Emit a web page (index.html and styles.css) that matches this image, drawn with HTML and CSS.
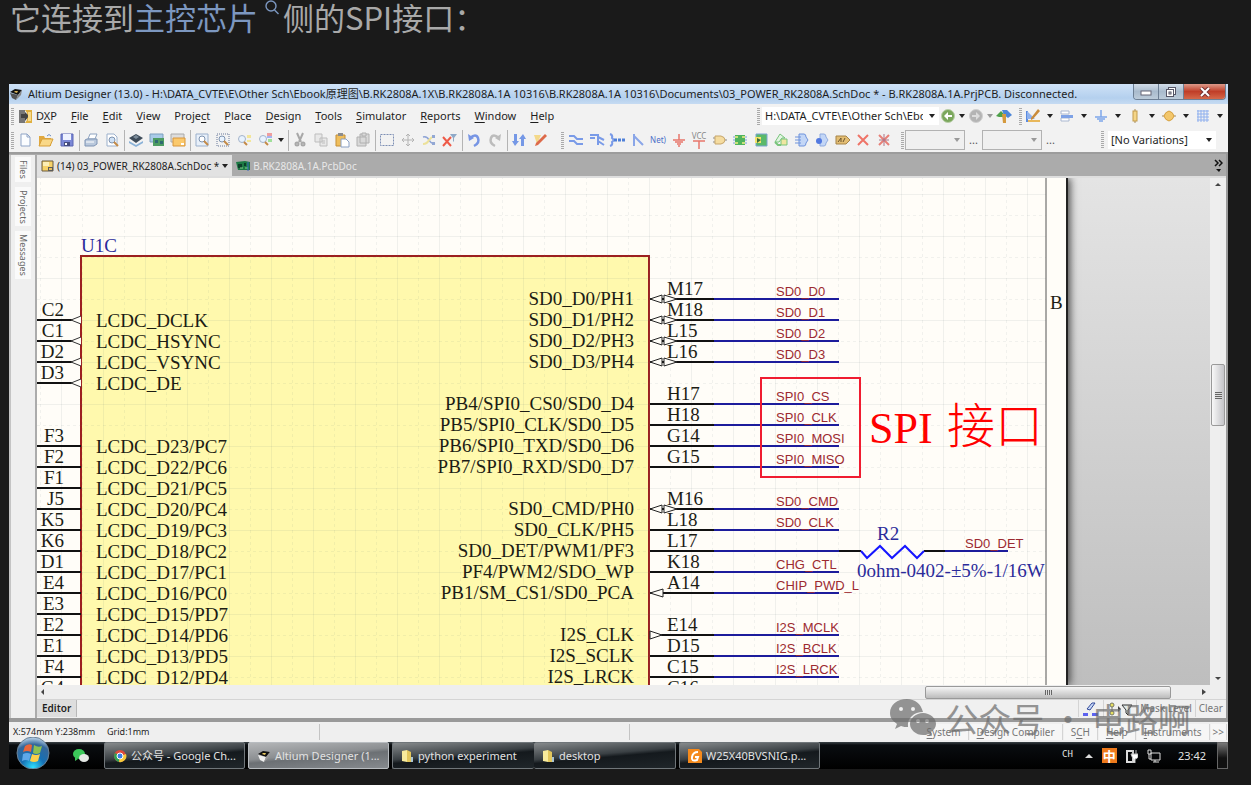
FILE: index.html
```html
<!DOCTYPE html>
<html lang="zh-CN">
<head>
<meta charset="utf-8">
<title>SPI接口</title>
<link rel="stylesheet" href="styles.css">
</head>
<body>
<p class="lead">它连接到<a class="term" href="#chip">主控芯片<svg class="term-icon" width="16" height="16" viewBox="0 0 16 16" fill="none" stroke="currentColor" stroke-width="1.4"><circle cx="7" cy="6" r="5"/><path d="M10.5 10l4 4"/></svg></a>侧的SPI接口：</p>

<main class="app">
  <header class="titlebar">
    <svg width="14" height="14" viewBox="0 0 14 14"><path d="M1 5l5-3 7 1-4 5z" fill="#111"/><path d="M1 6l8 2-2 5-4-2z" fill="#555"/><path d="M9 8l4-5-1 5-5 5z" fill="#888"/><path d="M6 4l3 0-1 2-3-1z" fill="#d8b45a"/></svg>
    <h1 class="title">Altium Designer (13.0) - H:\DATA_CVTE\E\Other Sch\Ebook原理图\B.RK2808A.1X\B.RK2808A.1A 10316\B.RK2808A.1A 10316\Documents\03_POWER_RK2808A.SchDoc * - B.RK2808A.1A.PrjPCB. Disconnected.</h1>
    <div class="win-buttons">
      <button class="win" aria-label="Minimize"><svg width="12" height="10" viewBox="0 0 12 10"><rect x="1" y="4" width="10" height="4" fill="#fff" stroke="#667"/></svg></button>
      <button class="win" aria-label="Restore"><svg width="12" height="12" viewBox="0 0 12 12" fill="#fff" stroke="#556"><rect x="3.500" y="1.500" width="7" height="7"/><rect x="1.500" y="3.500" width="7" height="7"/><rect x="4" y="6" width="2" height="2"/></svg></button>
      <button class="win close" aria-label="Close"><svg width="12" height="10" viewBox="0 0 12 10"><path d="M2 1l8 8M10 1l-8 8" stroke="#733" stroke-width="4"/><path d="M2 1l8 8M10 1l-8 8" stroke="#fff" stroke-width="2"/></svg></button>
    </div>
  </header>

  <div class="menubar">
    <span class="grip"></span>
    <nav class="menu">
      <a href="#dxp" class="dxp"><svg width="15" height="15" viewBox="0 0 15 15"><rect x="1" y="1" width="6" height="13" fill="#777"/><path d="M7 1h7v13H7l2-3V4z" fill="#e0b040"/><path d="M3 5h4V3l4 4-4 5V9H3z" fill="#444"/><path d="M10 3h3v9h-3z" fill="#f6d98a"/></svg><span>D<u>X</u>P</span></a>
      <a href="#file"><u>F</u>ile</a><a href="#edit"><u>E</u>dit</a><a href="#view"><u>V</u>iew</a><a href="#project">Proje<u>c</u>t</a><a href="#place"><u>P</u>lace</a><a href="#design"><u>D</u>esign</a><a href="#tools"><u>T</u>ools</a><a href="#simulator"><u>S</u>imulator</a><a href="#reports"><u>R</u>eports</a><a href="#window"><u>W</u>indow</a><a href="#help"><u>H</u>elp</a>
    </nav>
    <div class="nav-tools">
      <span class="grip"></span>
      <span class="combo path"><select aria-label="Document path"><option>H:\DATA_CVTE\E\Other Sch\Ebook</option></select></span>
      <button class="tool" aria-label="Back"><svg width="16" height="16" viewBox="0 0 16 16"><circle cx="8" cy="8" r="6.500" fill="#7ba75c" stroke="#b9cfa8"/><path d="M4 8l4-4v3h4v2H8v3z" fill="#fff"/></svg></button>
      <button class="drop" aria-label="Back history"></button>
      <button class="tool" aria-label="Forward"><svg width="16" height="16" viewBox="0 0 16 16"><circle cx="8" cy="8" r="6.500" fill="#b4b4b4" stroke="#d0d0d0"/><path d="M12 8L8 4v3H4v2h4v3z" fill="#ddd"/></svg></button>
      <button class="drop faint" aria-label="Forward history"></button>
      <button class="tool" aria-label="Home"><svg width="16" height="16" viewBox="0 0 16 16"><path d="M0 8l5-5 3 3v3H3z" fill="#4ea04a"/><path d="M6 2h5l5 5-4 3-4-3z" fill="#4d86d8"/><path d="M6 6h4v9H7z" fill="#d59a3e"/></svg></button>
      <span class="grip spaced"></span>
      <div class="place-tools">
        <button class="tool" aria-label="Drawing"><svg width="16" height="16" viewBox="0 0 16 16"><path d="M2 3v10h12" fill="none" stroke="#5a8ae0" stroke-width="2"/><path d="M2 3l8 8H2z" fill="#8fb2ee"/><path d="M13 1l2 2-7 8-2 1v-2z" fill="#c98b3a"/><path d="M3 12h12v2H3z" fill="#e8b75a"/></svg></button><button class="drop" aria-label="Drawing list"></button>
        <button class="tool" aria-label="Align"><svg width="16" height="16" viewBox="0 0 16 16"><path d="M2 3h8v3H2zM2 10h8v3H2z" fill="#fff" stroke="#a9b7d0"/><path d="M2 7h12v3H2z" fill="#7ea2e6"/></svg></button><button class="drop" aria-label="Align list"></button>
        <button class="tool" aria-label="Power"><svg width="16" height="16" viewBox="0 0 16 16"><path d="M8 2v7M2 9h12M4 11h8M6 13h4" stroke="#7ea6ea" stroke-width="1.500"/></svg></button><button class="drop" aria-label="Power list"></button>
        <button class="tool" aria-label="Parts"><svg width="16" height="16" viewBox="0 0 16 16"><path d="M8 1v14" stroke="#a58b5a"/><rect x="6" y="3" width="4" height="10" fill="#f4d588" stroke="#c29a4a"/></svg></button><button class="drop" aria-label="Parts list"></button>
        <button class="tool" aria-label="Sources"><svg width="16" height="16" viewBox="0 0 16 16"><path d="M1 8h14" stroke="#a58b5a"/><path d="M8 3q4 1 5 5-1 4-5 5-4-1-5-5 1-4 5-5z" fill="#f3c76c" stroke="#d6a040"/></svg></button><button class="drop" aria-label="Sources list"></button>
        <button class="tool" aria-label="Grid"><svg width="16" height="16" viewBox="0 0 16 16"><path d="M3 2v12M6 2v12M9 2v12M12 2v12M2 3h12M2 6h12M2 9h12M2 12h12" stroke="#8fb0ee"/></svg></button><button class="drop" aria-label="Grid list"></button>
      </div>
    </div>
  </div>

  <div class="toolbar">
    <span class="grip"></span>
    <button class="tool" aria-label="New"><svg width="16" height="16" viewBox="0 0 16 16"><path d="M4 2h6l3 3v9H4z" fill="#fbfdff" stroke="#8fa4c6"/><path d="M10 2v3h3" fill="none" stroke="#8fa4c6"/></svg></button>
    <button class="tool" aria-label="Open"><svg width="16" height="16" viewBox="0 0 16 16"><path d="M1 4h5l1 2h6v8H1z" fill="#e0a83f"/><path d="M4 7h11l-3 7H1z" fill="#f9d888" stroke="#d79f38"/><path d="M9 4q2-3 4 0" fill="none" stroke="#6d8fc4"/></svg></button>
    <button class="tool" aria-label="Save"><svg width="16" height="16" viewBox="0 0 16 16"><path d="M2 2h12v12H2z" fill="#7b88d6" stroke="#5d67b4"/><path d="M4 2h8v6H4z" fill="#eef2ff"/><path d="M5 10h6v4H5z" fill="#454c80"/><path d="M6 11h2v2H6z" fill="#fff"/></svg></button>
    <span class="sep"></span>
    <button class="tool" aria-label="Print"><svg width="16" height="16" viewBox="0 0 16 16"><path d="M5 7l2-5h7l-2 5z" fill="#fff" stroke="#8ea3c0"/><path d="M2 8l2-1h10v5l-3 2H2z" fill="#b9c8dc" stroke="#7f94b4"/><path d="M3 10h8" stroke="#fff"/></svg></button>
    <button class="tool" aria-label="Preview"><svg width="16" height="16" viewBox="0 0 16 16"><path d="M3 2h7l3 3v9H3z" fill="#fff" stroke="#9bb0cc"/><circle cx="8" cy="8" r="3" fill="#cfe1f5" stroke="#7e93b0"/><path d="M10 10l4 4" stroke="#c48a46" stroke-width="2"/></svg></button>
    <span class="sep"></span>
    <button class="tool" aria-label="Board"><svg width="16" height="16" viewBox="0 0 16 16"><path d="M1 9l7 4 7-4v2l-7 4-7-4z" fill="#8bb2d8"/><path d="M1 6l7-4 7 4-7 5z" fill="#3e4c5a"/><path d="M5 5l3-2 3 2-3 2z" fill="#7d8d9c"/></svg></button>
    <button class="tool" aria-label="PCB"><svg width="16" height="16" viewBox="0 0 16 16"><path d="M1 2h13v8H1z" fill="#a9cbe8" stroke="#7c9fbe"/><path d="M4 6h11v8H4z" fill="#4d9c62"/><path d="M6 8h3v3H6zM11 9h3v3h-3z" fill="#2f6a72"/></svg></button>
    <button class="tool" aria-label="Sheet"><svg width="16" height="16" viewBox="0 0 16 16"><path d="M1 2h13v8H1z" fill="#ddd" stroke="#aaa"/><path d="M3 6h12v8H3z" fill="#fbc96c" stroke="#d8963c"/><path d="M11 11h3v2h-3z" fill="#fff"/></svg></button>
    <span class="sep"></span>
    <button class="tool" aria-label="Fit document"><svg width="16" height="16" viewBox="0 0 16 16"><path d="M2 2h12v12H2z" fill="#e8f0fa" stroke="#9bb0cc"/><circle cx="8" cy="7" r="3" fill="#fff" stroke="#7e93b0"/><path d="M10 9l4 4" stroke="#c48a46" stroke-width="2"/></svg></button>
    <button class="tool" aria-label="Zoom area"><svg width="16" height="16" viewBox="0 0 16 16"><path d="M2 2h12v12H2z" fill="none" stroke="#68789a" stroke-dasharray="1 1"/><circle cx="7" cy="7" r="3" fill="#e8f3ff" stroke="#7e93b0"/><path d="M9 9l4 4" stroke="#c48a46" stroke-width="2"/></svg></button>
    <button class="tool" aria-label="Zoom selected"><svg width="16" height="16" viewBox="0 0 16 16"><circle cx="6" cy="7" r="3.500" fill="#e8f3ff" stroke="#a3b3ca"/><path d="M8 10l3 3" stroke="#c48a46" stroke-width="2"/><path d="M11 3h4v3h-4zM11 8h4v2h-4z" fill="#f3e69a"/></svg></button>
    <button class="tool" aria-label="Zoom filtered"><svg width="16" height="16" viewBox="0 0 16 16"><circle cx="6" cy="7" r="3.500" fill="#e8f3ff" stroke="#a3b3ca"/><path d="M8 10l3 3" stroke="#c48a46" stroke-width="2"/><path d="M10 1h5v3h-5z" fill="#ef9e9e"/><path d="M10 4h5v2h-5z" fill="#a2b4f2"/><path d="M11 7h4v3h-4z" fill="#a0e09a"/></svg></button>
    <button class="drop" aria-label="Zoom list"></button>
    <span class="sep"></span>
    <button class="tool" aria-label="Cut"><svg width="16" height="16" viewBox="0 0 16 16" fill="none" stroke="#a8a8a8" stroke-width="2"><path d="M5 1l4 9M11 1L7 10"/><circle cx="5" cy="12" r="1.500"/><circle cx="11" cy="12" r="1.500"/></svg></button>
    <button class="tool" aria-label="Copy"><svg width="16" height="16" viewBox="0 0 16 16" fill="#e8e8e8" stroke="#bdbdbd"><path d="M2 2h7v8H2zM7 6h7v8H7z"/><path d="M9 9h3M9 11h3"/></svg></button>
    <button class="tool" aria-label="Paste"><svg width="16" height="16" viewBox="0 0 16 16"><path d="M2 3h9v11H2z" fill="#efbe5c" stroke="#c58f36"/><path d="M4 1h5v3H4z" fill="#8c8c8c"/><path d="M7 7h5l3 3v5H7z" fill="#fff" stroke="#8aa0c4"/></svg></button>
    <button class="tool" aria-label="Rubber stamp"><svg width="16" height="16" viewBox="0 0 16 16" fill="#d9d9d9" stroke="#b0b0b0"><path d="M5 2h9v9H5zM2 5h9v9H2z"/><path d="M7 1h4v3H7z"/></svg></button>
    <span class="sep"></span>
    <button class="tool" aria-label="Select area"><svg width="16" height="16" viewBox="0 0 16 16"><rect x="1.500" y="2.500" width="13" height="11" fill="none" stroke="#7d8fb4" stroke-dasharray="2 1"/></svg></button>
    <button class="tool" aria-label="Move"><svg width="16" height="16" viewBox="0 0 16 16" stroke="#b4b4b4" fill="none"><path d="M8 2v12M2 8h12M6 4l2-2 2 2M6 12l2 2 2-2M4 6L2 8l2 2M12 6l2 2-2 2"/></svg></button>
    <button class="tool" aria-label="Deselect"><svg width="16" height="16" viewBox="0 0 16 16"><path d="M2 5q4-1 6 3t6 3" fill="none" stroke="#8ea4d6" stroke-width="1.500"/><path d="M2 12q4 0 6-4l3-3" fill="none" stroke="#ece19a" stroke-width="2"/><path d="M11 3h3v3h-3zM11 10h3v3h-3z" fill="#93a8d4"/></svg></button>
    <button class="tool" aria-label="Clear filter"><svg width="16" height="16" viewBox="0 0 16 16"><path d="M1 5l8 9M9 5l-8 9" stroke="#ee5a48" stroke-width="2"/><path d="M8 2h7l-3 4v4l-1-1V6z" fill="#8fa9c8"/></svg></button>
    <span class="sep"></span>
    <button class="tool" aria-label="Undo"><svg width="16" height="16" viewBox="0 0 16 16"><path d="M4 6q6-5 8 0t-4 8" fill="none" stroke="#7795e4" stroke-width="2.500"/><path d="M2 2l1 7 5-3z" fill="#7795e4"/></svg></button>
    <button class="tool" aria-label="Redo"><svg width="16" height="16" viewBox="0 0 16 16"><path d="M12 6q-6-5-8 0t4 8" fill="none" stroke="#bcbcbc" stroke-width="2.500"/><path d="M14 2l-1 7-5-3z" fill="#bcbcbc"/></svg></button>
    <span class="sep"></span>
    <button class="tool" aria-label="Hierarchy"><svg width="16" height="16" viewBox="0 0 16 16" fill="#7598e6"><path d="M3 2h3v7h2l-4 5-3-5h2zM10 14h3V7h2l-3-5-4 5h2z"/></svg></button>
    <button class="tool" aria-label="Cross probe"><svg width="16" height="16" viewBox="0 0 16 16"><path d="M2 3h7l-4 9z" fill="#f4d98a"/><path d="M13 2l2 2-9 9-3 1 1-3z" fill="#dd6a4a"/></svg></button>
    <span class="grip wide"></span>
    <div class="wiring">
      <button class="tool" aria-label="Wire"><svg width="16" height="16" viewBox="0 0 16 16"><path d="M1 4h5l3 3h6M1 9h5l3 3h6" fill="none" stroke="#7a9be8" stroke-width="2"/></svg></button>
      <button class="tool" aria-label="Bus"><svg width="16" height="16" viewBox="0 0 16 16"><path d="M1 3h8v10M9 5l6 3M9 9l6 4M1 6h5" fill="none" stroke="#7a9be8" stroke-width="2"/></svg></button>
      <button class="tool" aria-label="Harness"><svg width="16" height="16" viewBox="0 0 16 16"><path d="M1 2q3 1 2 4l2 2-2 2q1 3-2 4" fill="none" stroke="#7a9be8" stroke-width="2"/><path d="M5 8h11" stroke="#4f80d8" stroke-width="3" stroke-dasharray="3 1"/></svg></button>
      <button class="tool" aria-label="Bus entry"><svg width="16" height="16" viewBox="0 0 16 16"><path d="M4 2v12M4 4l9 9" fill="none" stroke="#8aa6e8" stroke-width="2"/></svg></button>
      <button class="tool net" aria-label="Net label">Net)</button>
      <button class="tool" aria-label="Ground"><svg width="16" height="16" viewBox="0 0 16 16"><path d="M8 2v6M2 8h12M4 10h8M6 12h4M7 14h2" stroke="#e8776c" stroke-width="1.500"/></svg></button>
      <button class="tool vcc" aria-label="VCC">VCC<svg width="14" height="9" viewBox="0 0 14 9"><path d="M1 1h12M7 1v8" stroke="#e8776c" stroke-width="1.500"/></svg></button>
      <button class="tool" aria-label="Part"><svg width="16" height="16" viewBox="0 0 16 16"><path d="M1 6h4M1 10h4M11 8h4" stroke="#888"/><path d="M3 4h6q4 1 4 4t-4 4H3z" fill="#f5dca0" stroke="#c6a56a"/></svg></button>
      <button class="tool" aria-label="Sheet symbol"><svg width="16" height="16" viewBox="0 0 16 16"><path d="M1 5h14M1 8h14M1 11h14" stroke="#7da0e0"/><path d="M3 3h10v10H3z" fill="#4fb35e"/><path d="M3 4h3v2H3zM10 4h3v2h-3zM3 10h3v2H3zM10 10h3v2h-3z" fill="#c9e07a"/></svg></button>
      <button class="tool" aria-label="Sheet entry"><svg width="16" height="16" viewBox="0 0 16 16"><path d="M3 2h11v12H3z" fill="#5ab96a" stroke="#7aa5d0"/><path d="M2 5h6v6H2z" fill="#f2e36a"/><path d="M4 6l4 2-4 3z" fill="#3b6a3b"/></svg></button>
      <button class="tool" aria-label="Device sheet"><svg width="16" height="16" viewBox="0 0 16 16"><path d="M7 2l5 4H9L6 10H2z" fill="#e2f5e2" stroke="#79c47c"/><path d="M8 7h6v6H8z" fill="#efe6a0" stroke="#79c47c"/><path d="M2 10l3 3h3" fill="none" stroke="#79c47c" stroke-width="2"/></svg></button>
      <button class="tool" aria-label="Harness connector"><svg width="16" height="16" viewBox="0 0 16 16"><path d="M5 2h5q2 0 2 3l2 3-2 3q0 3-2 3H5z" fill="#c3d6f6" stroke="#6f93dc"/><path d="M1 5h6M1 8h6M1 11h6" stroke="#6f93dc"/></svg></button>
      <button class="tool" aria-label="Harness entry"><svg width="16" height="16" viewBox="0 0 16 16"><path d="M6 2h4q2 0 2 3l2 3-2 3q0 3-2 3H6z" fill="#c3d6f6" stroke="#8fabe0"/><circle cx="5" cy="9" r="3" fill="#5279e0"/></svg></button>
      <button class="tool" aria-label="Port"><svg width="16" height="16" viewBox="0 0 16 16"><path d="M1 4h10l4 4-4 4H1z" fill="#e3bd72" stroke="#a68448"/><path d="M3 10l3-4v4M8 10l2-4" stroke="#6b5530" fill="none"/></svg></button>
      <button class="tool" aria-label="No ERC"><svg width="16" height="16" viewBox="0 0 16 16"><path d="M3 3l10 10M13 3L3 13" stroke="#ee7468" stroke-width="2"/></svg></button>
      <button class="tool" aria-label="Specific no ERC"><svg width="16" height="16" viewBox="0 0 16 16"><path d="M3 3l10 10M13 3L3 13" stroke="#e88078" stroke-width="2"/><path d="M8 2v12M3 8h10" stroke="#a78"/></svg></button>
    </div>
    <span class="grip spaced"></span>
    <span class="combo boxed"><select aria-label="Filter"><option></option></select></span><button class="more" aria-label="More filters">...</button>
    <span class="combo boxed"><select aria-label="Mask"><option></option></select></span><button class="more" aria-label="More masks">...</button>
    <div class="variations">
      <span class="grip"></span>
      <span class="combo"><select aria-label="Variations"><option>[No Variations]</option></select></span>
    </div>
  </div>

  <div class="work">
    <aside class="side">
      <button>Files</button><button>Projects</button><button>Messages</button>
    </aside>
    <section class="editor">
      <div class="tabs">
        <button class="tab active"><svg width="13" height="12" viewBox="0 0 13 12"><path d="M1 1h11v10H1z" fill="#f7d268" stroke="#6b5a3c"/><path d="M2 2h6v4H2z" fill="#fdeeb4"/><path d="M7 7h5v4H7z" fill="#5a5a5a"/><path d="M8 8h3v2H8z" fill="#e8c060"/></svg>(14) 03_POWER_RK2808A.SchDoc *<i class="caret"></i></button>
        <button class="tab"><svg width="14" height="12" viewBox="0 0 14 12"><path d="M0 2l9-1 5 1v8H2z" fill="#1d7a45"/><path d="M2 4h4v4H2zM8 3h2v3H8z" fill="#0c3e2a"/><path d="M4 8h3M9 8h3" stroke="#86d48c"/><path d="M12 2v9" stroke="#3b66c0"/></svg>B.RK2808A.1A.PcbDoc</button>
        <button class="tabs-more" aria-label="All tabs"><svg width="9" height="13" viewBox="0 0 9 13"><path d="M1 1l3 3-3 3M5 1l3 3-3 3" fill="none" stroke="#111" stroke-width="1.500"/><path d="M2 10h5l-2 3z" fill="#111"/></svg></button>
      </div>
      <div class="view">
        <div class="desk">
          <svg class="sheet" width="1031" height="507" viewBox="37 178 1031 507">
            <defs>
              <pattern id="grid" x="61" y="194" width="42" height="42" patternUnits="userSpaceOnUse">
                <path d="M0 .5H42M.5 0V42" stroke="#60707018" fill="none"/>
                <path d="M0 21.500H42M21.500 0V42" stroke="#60707016" stroke-dasharray="3 3" fill="none"/>
              </pattern>
              <g id="io" fill="#fffdf8" stroke="#222"><path d="M650 0L662 -4V4ZM664 -4L677 0L664 4Z"/></g>
              <path id="in" d="M81 -4L71 0L81 4" fill="#fffdf8" stroke="#333"/>
            </defs>
            <rect x="37" y="178" width="1031" height="507" fill="#fffdf8"/>
            <rect x="81" y="256" width="568" height="440" fill="#fff9ad" stroke="#9c2020" stroke-width="2"/>
            <rect x="37" y="178" width="1009" height="507" fill="url(#grid)"/>
            <path d="M1046 178V685" stroke="#555" stroke-width="1"/>
            <path d="M1067 178V685" stroke="#222" stroke-width="2"/>
            <g stroke="#111" stroke-width="2" fill="none">
              <path d="M37 320H72M37 341H72M37 362H72M37 383H72M37 446H81M37 467H81M37 488H81M37 509H81M37 530H81M37 551H81M37 572H81M37 593H81M37 614H81M37 635H81M37 656H81M37 677H81"/>
              <path d="M650 299H714M650 320H714M650 341H714M650 362H714M650 404H714M650 425H714M650 446H714M650 467H714M650 509H714M650 530H714M650 551H714M650 572H714M650 593H714M650 635H714M650 656H714M650 677H714M839 551H861M924 551H945"/>
            </g>
            <path d="M714 299H839M714 320H839M714 341H839M714 362H839M714 404H839M714 425H839M714 446H839M714 467H839M714 509H839M714 530H839M714 551H839M714 572H839M714 593H839M714 635H839M714 656H839M714 677H839M945 551H1008" stroke="#1c1c9c" stroke-width="2"/>
            <path d="M861 551L867 558L880 546L892 558L905 546L917 558L924 551" fill="none" stroke="#1616ff" stroke-width="2"/>
            <use href="#in" y="320"/><use href="#in" y="341"/><use href="#in" y="362"/><use href="#in" y="383"/>
            <use href="#io" y="299"/><use href="#io" y="320"/><use href="#io" y="341"/><use href="#io" y="362"/><use href="#io" y="509"/>
            <path d="M650 593L663 589V597ZM650 631L662 635L650 639Z" fill="#fffdf8" stroke="#222"/>
            <text class="pin blue" x="81" y="252">U1C</text>
            <text class="pin end" y="295"><tspan x="64" dy="21">C2</tspan><tspan x="64" dy="21">C1</tspan><tspan x="64" dy="21">D2</tspan><tspan x="64" dy="21">D3</tspan><tspan x="64" dy="63">F3</tspan><tspan x="64" dy="21">F2</tspan><tspan x="64" dy="21">F1</tspan><tspan x="64" dy="21">J5</tspan><tspan x="64" dy="21">K5</tspan><tspan x="64" dy="21">K6</tspan><tspan x="64" dy="21">D1</tspan><tspan x="64" dy="21">E4</tspan><tspan x="64" dy="21">E3</tspan><tspan x="64" dy="21">E2</tspan><tspan x="64" dy="21">E1</tspan><tspan x="64" dy="21">F4</tspan><tspan x="64" dy="21">G4</tspan></text>
            <text class="pin" y="306"><tspan x="96" dy="21">LCDC_DCLK</tspan><tspan x="96" dy="21">LCDC_HSYNC</tspan><tspan x="96" dy="21">LCDC_VSYNC</tspan><tspan x="96" dy="21">LCDC_DE</tspan><tspan x="96" dy="63">LCDC_D23/PC7</tspan><tspan x="96" dy="21">LCDC_D22/PC6</tspan><tspan x="96" dy="21">LCDC_D21/PC5</tspan><tspan x="96" dy="21">LCDC_D20/PC4</tspan><tspan x="96" dy="21">LCDC_D19/PC3</tspan><tspan x="96" dy="21">LCDC_D18/PC2</tspan><tspan x="96" dy="21">LCDC_D17/PC1</tspan><tspan x="96" dy="21">LCDC_D16/PC0</tspan><tspan x="96" dy="21">LCDC_D15/PD7</tspan><tspan x="96" dy="21">LCDC_D14/PD6</tspan><tspan x="96" dy="21">LCDC_D13/PD5</tspan><tspan x="96" dy="21">LCDC_D12/PD4</tspan></text>
            <text class="pin end" y="284"><tspan x="634" dy="21">SD0_D0/PH1</tspan><tspan x="634" dy="21">SD0_D1/PH2</tspan><tspan x="634" dy="21">SD0_D2/PH3</tspan><tspan x="634" dy="21">SD0_D3/PH4</tspan><tspan x="634" dy="42">PB4/SPI0_CS0/SD0_D4</tspan><tspan x="634" dy="21">PB5/SPI0_CLK/SD0_D5</tspan><tspan x="634" dy="21">PB6/SPI0_TXD/SD0_D6</tspan><tspan x="634" dy="21">PB7/SPI0_RXD/SD0_D7</tspan><tspan x="634" dy="42">SD0_CMD/PH0</tspan><tspan x="634" dy="21">SD0_CLK/PH5</tspan><tspan x="634" dy="21">SD0_DET/PWM1/PF3</tspan><tspan x="634" dy="21">PF4/PWM2/SDO_WP</tspan><tspan x="634" dy="21">PB1/SM_CS1/SD0_PCA</tspan><tspan x="634" dy="42">I2S_CLK</tspan><tspan x="634" dy="21">I2S_SCLK</tspan><tspan x="634" dy="21">I2S_LRCK</tspan></text>
            <text class="pin" y="274"><tspan x="667" dy="21">M17</tspan><tspan x="667" dy="21">M18</tspan><tspan x="667" dy="21">L15</tspan><tspan x="667" dy="21">L16</tspan><tspan x="667" dy="42">H17</tspan><tspan x="667" dy="21">H18</tspan><tspan x="667" dy="21">G14</tspan><tspan x="667" dy="21">G15</tspan><tspan x="667" dy="42">M16</tspan><tspan x="667" dy="21">L18</tspan><tspan x="667" dy="21">L17</tspan><tspan x="667" dy="21">K18</tspan><tspan x="667" dy="21">A14</tspan><tspan x="667" dy="42">E14</tspan><tspan x="667" dy="21">D15</tspan><tspan x="667" dy="21">C15</tspan><tspan x="667" dy="21">C16</tspan></text>
            <text class="net-name" y="275"><tspan x="776" dy="21">SD0_D0</tspan><tspan x="776" dy="21">SD0_D1</tspan><tspan x="776" dy="21">SD0_D2</tspan><tspan x="776" dy="21">SD0_D3</tspan><tspan x="776" dy="42">SPI0_CS</tspan><tspan x="776" dy="21">SPI0_CLK</tspan><tspan x="776" dy="21">SPI0_MOSI</tspan><tspan x="776" dy="21">SPI0_MISO</tspan><tspan x="776" dy="42">SD0_CMD</tspan><tspan x="776" dy="21">SD0_CLK</tspan><tspan x="965" dy="21">SD0_DET</tspan><tspan x="776" dy="21">CHG_CTL</tspan><tspan x="776" dy="21">CHIP_PWD_L</tspan><tspan x="776" dy="42">I2S_MCLK</tspan><tspan x="776" dy="21">I2S_BCLK</tspan><tspan x="776" dy="21">I2S_LRCK</tspan></text>
            <text class="pin blue" x="877" y="540">R2</text>
            <text class="pin blue" x="857" y="577">0ohm-0402-±5%-1/16W</text>
            <text class="pin" x="1050" y="309">B</text>
            <rect x="761" y="378" width="99" height="99" fill="none" stroke="#f01c30" stroke-width="2"/>
            <text class="note" x="869" y="443">SPI<tspan class="note-cjk" x="947">接口</tspan></text>
          </svg>
        </div>
        <div class="vbar"><span class="arrow up"></span><span class="thumb"></span><span class="arrow down"></span></div>
      </div>
      <div class="hbar"><span class="arrow left"></span><span class="thumb"></span><span class="arrow right"></span></div>
      <div class="views">
        <button class="view-tab">Editor</button>
        <div class="mask">
          <button aria-label="Highlight"><svg width="18" height="14" viewBox="0 0 18 14"><path d="M5 7l5-6h3L8 8z" fill="#c8d8f6" stroke="#334a9a"/><path d="M1 11h5v3H1zM10 11h6v3h-6z" fill="#5c62f0"/></svg></button>
          <button aria-label="Filter"><svg width="26" height="14" viewBox="0 0 26 14"><circle cx="5" cy="3" r="2" fill="#e8e060" stroke="#776"/><path d="M5 5v4" stroke="#776"/><circle cx="5" cy="11" r="2" fill="#e8e060" stroke="#776"/><path d="M11 4l3 3-3 3z" fill="#444"/><path d="M15 3h10l-4 5v5l-2-2V8z" fill="#dfe8e8" stroke="#333"/></svg></button>
          <button>Mask Level</button><button>Clear</button>
        </div>
      </div>
    </section>
  </div>

  <footer class="status">
    <span class="coords">X:574mm Y:238mm</span><span class="grid-size">Grid:1mm</span><span class="hint"></span>
    <div class="panels"><button><u>S</u>ystem</button><button><u>D</u>esign Compiler</button><button>S<u>C</u>H</button><button><u>H</u>elp</button><button><u>I</u>nstruments</button><button class="expand">&gt;&gt;</button></div>
  </footer>

  <div class="taskbar">
    <button class="start" aria-label="Start"><svg width="34" height="32" viewBox="0 0 34 32"><defs><radialGradient id="orb" cx=".5" cy=".95" r=".9"><stop offset="0" stop-color="#2fe0ff"/><stop offset=".4" stop-color="#1670b4"/><stop offset=".8" stop-color="#35679a"/><stop offset="1" stop-color="#a7c3dc"/></radialGradient></defs><circle cx="17" cy="16" r="16" fill="url(#orb)" stroke="#6b8296"/><path d="M9 9q4-3 7-1l-1 7q-4-2-8 0z" fill="#e8653a"/><path d="M18 8q4 3 8 1l-2 7q-4 2-7 0z" fill="#8cc152"/><path d="M7 17q4-2 8 0l-2 7q-3-2-7 0z" fill="#5fa8e8"/><path d="M16 17q4 2 8 0l-2 7q-4 2-8 0z" fill="#fbd04a"/></svg></button>
    <button class="pinned" aria-label="WeChat"><svg width="16" height="14" viewBox="0 0 16 14"><ellipse cx="6" cy="5" rx="6" ry="5" fill="#3cc85a"/><ellipse cx="11" cy="9" rx="5" ry="4" fill="#e4e8e4"/><path d="M2 8v4l3-2z" fill="#3cc85a"/></svg></button>
    <button class="task"><svg width="14" height="14" viewBox="0 0 14 14"><circle cx="7" cy="7" r="6" fill="#de4a3c"/><path d="M7 7L2 4a6 6 0 0 0 4 9z" fill="#2fa352"/><path d="M7 7l6-2a6 6 0 0 1-7 8z" fill="#f7c93c"/><circle cx="7" cy="7" r="3" fill="#3c7fe6" stroke="#fff"/></svg><span>公众号 - Google Ch...</span></button>
    <button class="task current"><svg width="14" height="14" viewBox="0 0 14 14"><path d="M1 5l5-3 7 1-4 5z" fill="#111"/><path d="M1 6l8 2-2 5-4-2z" fill="#eee"/><path d="M9 8l4-5-1 5-5 5z" fill="#999"/><path d="M6 4l3 0-1 2-3-1z" fill="#e8c860"/></svg><span>Altium Designer (1...</span></button>
    <div class="task-group">
      <button class="task"><svg width="13" height="14" viewBox="0 0 13 14"><path d="M1 2l5-1v12l-5-1z" fill="#f8eb9c"/><path d="M6 1l4 2v10H6z" fill="#e2c65c"/><path d="M10 8h2v5h-2z" fill="#a9c4d4"/></svg><span>python experiment</span></button>
      <button class="task"><svg width="13" height="14" viewBox="0 0 13 14"><path d="M1 2l5-1v12l-5-1z" fill="#f8eb9c"/><path d="M6 1l4 2v10H6z" fill="#e2c65c"/><path d="M10 8h2v5h-2z" fill="#a9c4d4"/></svg><span>desktop</span></button>
    </div>
    <button class="task"><svg width="14" height="14" viewBox="0 0 14 14"><path d="M0 0h11l3 3v11H0z" fill="#f58a1c"/><path d="M10 3Q5 3 4 8t5 3l1-3H7" fill="none" stroke="#fff" stroke-width="2"/></svg><span>W25X40BVSNIG.p...</span></button>
    <div class="tray">
      <span class="lang">CH</span>
      <button class="tray-icon" aria-label="Hidden icons"><svg width="8" height="5" viewBox="0 0 8 5"><path d="M0 5l4-4 4 4z" fill="#ddd"/></svg></button>
      <button class="ime">中</button>
      <button class="tray-icon" aria-label="Power"><svg width="12" height="14" viewBox="0 0 12 14"><path d="M1 2h6v11H1z" fill="none" stroke="#ddd" stroke-width="2"/><path d="M5 5h7v3q-1 2-3 2v4H7v-4zM7 1v4M10 1v4" fill="#fff" stroke="#bbb"/></svg></button>
      <button class="tray-icon" aria-label="Network"><svg width="14" height="14" viewBox="0 0 14 14" fill="none" stroke="#ddd"><path d="M4 4h9v7H4zM6 13h6M8 11v2" /><path d="M1 1h3v4H1zM2 5v5h2"/></svg></button>
      <time>23:42</time>
      <button class="show-desktop" aria-label="Show desktop"></button>
    </div>
  </div>

  <div class="watermark">
    <svg width="46" height="38" viewBox="0 0 46 38"><path fill-rule="evenodd" d="M17 0C7 0 0 6 0 14c0 5 3 8 7 11l-2 5 6-3c2 1 5 1 7 1-1-9 6-15 15-15C31 5 25 0 17 0zM11 8a2 2 0 1 1 0 4 2 2 0 0 1 0-4zM23 8a2 2 0 1 1 0 4 2 2 0 0 1 0-4z"/><path fill-rule="evenodd" d="M33 14c-7 0-13 5-13 11s6 11 13 11c2 0 4 0 5-1l4 2-1-4c3-2 5-5 5-8 0-6-6-11-13-11zM28 20a2 2 0 1 1 0 4 2 2 0 0 1 0-4zM37 20a2 2 0 1 1 0 4 2 2 0 0 1 0-4z"/></svg>
    <span>公众号 · 电路啊</span>
  </div>
</main>
</body>
</html>
```

FILE: styles.css
```css
* { box-sizing: border-box; }

body {
  margin: 0;
  background: #1a1a1a;
  font: 11px/16px "Noto Sans", "Noto Sans CJK SC", sans-serif;
  color: #1e1e1e;
}

button, select {
  margin: 0;
  padding: 0;
  border: 0;
  border-radius: 0;
  background: none;
  color: inherit;
  font: inherit;
}

svg { display: block; flex: none; }

a { color: inherit; text-decoration: none; }

.lead {
  margin: 0;
  padding: 0 10px;
  height: 84px;
  font: 31px/30px "Noto Sans CJK SC", sans-serif;
  color: #a9a9a9;
}

.term { color: #7c97c0; }

.term-icon {
  display: inline-block;
  margin: 0 3px 0 6px;
  vertical-align: 14px;
}

.app {
  position: relative;
  margin: 0 23px 16px 9px;
  background: #efefef;
}

.titlebar {
  display: flex;
  align-items: center;
  gap: 5px;
  height: 20px;
  background: linear-gradient(#cfe2f7, #b4d0ee 70%, #c6dbf2);
}

.title {
  flex: 1;
  min-width: 0;
  margin: 0;
  font: inherit;
  white-space: nowrap;
  overflow: hidden;
}

.win-buttons { display: flex; align-self: flex-start; margin-right: 2px; border: 1px solid #6d7f94; border-top: 0; border-radius: 0 0 4px 4px; overflow: hidden; }

.win {
  display: grid;
  place-items: center;
  width: 25px;
  height: 15px;
  border-right: 1px solid #6d7f94;
  background: linear-gradient(#d2dde8, #a9bbcd 50%, #bccbd9);
}

.win.close { width: 41px; border: 0; background: linear-gradient(#dd9a8a, #c03e28 50%, #d4684a); }

.menubar, .toolbar { display: flex; align-items: center; height: 24px; padding-left: 2px; background: #f2f2f2; }
.toolbar { gap: 1px; }

.grip {
  flex: none;
  width: 3px;
  height: 17px;
  background: repeating-linear-gradient(#aaa 0 1px, transparent 1px 2px);
}

.grip.spaced { margin-left: 6px; }
.grip.wide { margin: 0 1px 0 10px; }

.menu { display: flex; gap: 14px; margin-left: 4px; }
.menu a { white-space: nowrap; }
.dxp { display: flex; align-items: center; gap: 3px; }
u { text-underline-offset: 2px; }

.nav-tools { display: flex; align-items: center; margin-left: auto; }
.place-tools { display: grid; grid-template-columns: repeat(12, 17px); margin-left: 2px; align-items: center; }

.tool { display: grid; place-items: center; width: 20px; height: 20px; flex: none; }
.place-tools .tool { width: 17px; }
.nav-tools > .tool { width: 18px; }

.drop { display: grid; place-items: center; width: 10px; height: 16px; flex: none; }
.nav-tools .drop { justify-self: center; }

.drop::before, .caret {
  content: "";
  border: 3px solid transparent;
  border-top: 4px solid #222;
  border-bottom: 0;
}

.drop.faint::before { border-top-color: #999; }

.combo { position: relative; display: flex; background: #fff; }
.combo select { appearance: none; width: 100%; height: 18px; padding: 0 16px 0 3px; line-height: 18px; overflow: hidden; }

.combo::after {
  content: "";
  position: absolute;
  right: 4px;
  top: 7px;
  border: 3px solid transparent;
  border-top: 4px solid #222;
  border-bottom: 0;
  pointer-events: none;
}

.combo.path { width: 177px; margin-left: 2px; }
.combo.boxed { width: 60px; border: 1px solid #b2b2b2; background: #f0f0f0; }
.combo.boxed::after { border-top-color: #999; }
.more { width: 15px; color: #555; }

.sep { width: 2px; height: 21px; border-right: 1px solid #b4b4b4; }

.wiring { display: grid; grid-template-columns: repeat(16, 1fr); width: 328px; }
.net { color: #4d6fc8; font-size: 8px; line-height: 10px; }
.vcc { color: #888; font-size: 8px; line-height: 9px; align-content: center; }

.variations { display: flex; gap: 4px; width: 127px; margin-left: auto; }
.variations .combo { width: 108px; }

.work { display: flex; background: #ababab; border-top: 2px solid #9c9c9c; border-right: 2px solid #9a9a9a; }

.side {
  display: flex;
  flex-direction: column;
  gap: 5px;
  width: 26px;
  margin: 1px 2px 0 0;
  padding: 2px 4px;
  border-left: 2px solid #c4c4c4;
  background: #efefef;
}

.side button {
  writing-mode: vertical-rl;
  width: 16px;
  padding: 3px 0;
  background: #fafafa;
  color: #666;
  font-size: 9px;
  line-height: 16px;
}

.editor { flex: 1; min-width: 0; }

.tabs { display: flex; height: 24px; padding-top: 1px; border-bottom: 2px solid #dedede; }

.tab {
  display: flex;
  align-items: center;
  gap: 3px;
  padding: 0 4px;
  color: #e8e8e8;
  font-size: 10px;
  white-space: nowrap;
}

.tab.active { background: #e2e2e2; color: #222; }
.tabs-more { margin: 0 3px 0 auto; }

.view { display: flex; }

.desk {
  flex: 1;
  min-width: 0;
  overflow: hidden;
  background: linear-gradient(#e4e4e4, #bebebe);
}

.sheet { box-shadow: 2px 0 8px #444; }

.pin { font: 19px "Liberation Serif", serif; fill: #1c1c14; }
.blue { fill: #2b2b9a; }
.end { text-anchor: end; }
.net-name { font: 13px "Liberation Sans", sans-serif; fill: #9c2a30; }
.note { font: 44px "Liberation Serif", serif; fill: #f00; }
.note-cjk { font: 300 48px "Noto Sans CJK SC", sans-serif; }

.vbar, .hbar { display: flex; align-items: center; background: #eee; }
.vbar { flex-direction: column; width: 16px; padding: 5px 0; }
.hbar { height: 15px; padding: 0 20px 0 4px; border-bottom: 1px solid #d4d4d4; }

.arrow { border: 3px solid transparent; }
.up { border-bottom-color: #444; border-top: 0; }
.down { border-top-color: #444; border-bottom: 0; margin-top: auto; }
.left { border-right-color: #444; border-left: 0; }
.right { border-left: 4px solid #444; border-right: 0; }

.thumb { display: grid; place-items: center; border: 1px solid #999; border-radius: 2px; }
.thumb::before { content: ""; width: 7px; height: 7px; }
.vbar .thumb { width: 14px; height: 62px; margin-top: 178px; background: linear-gradient(90deg, #f8f8f8, #c4c4c8); }
.vbar .thumb::before { background: repeating-linear-gradient(#666 0 1px, #ddd 1px 2px); }
.hbar .thumb { width: 246px; height: 13px; margin-left: auto; background: linear-gradient(#f6f6f6, #bcbcbc); }
.hbar .thumb::before { height: 5px; background: repeating-linear-gradient(90deg, #666 0 1px, #ddd 1px 2px); }
.hbar .right { margin-left: 31px; }

.views { display: flex; align-items: flex-start; height: 18px; background: #f0f0f0; font-size: 10px; }
.view-tab { padding: 0 5px; border-right: 1px solid #b8b8b8; background: #dedede; font-weight: 600; line-height: 17px; }
.mask { display: flex; margin-left: auto; color: #777; }
.mask button { padding: 0 3px; border-left: 1px solid #d4d4d4; line-height: 17px; }

.status {
  display: flex;
  align-items: center;
  height: 24px;
  padding-left: 4px;
  border-top: 4px solid #999;
  font-size: 9px;
}

.coords { width: 94px; white-space: nowrap; }
.grid-size { width: 212px; }
.hint { width: 311px; height: 16px; border: 1px solid #c4c4c4; border-width: 0 1px; }
.panels { display: flex; gap: 1px; margin-left: auto; padding-right: 1px; color: #777; font-size: 10px; }
.panels button { padding: 0 7px; background: #f6f6f6; border-right: 1px solid #d4d4d4; }
.panels .expand { padding: 0 2px; }

.taskbar { display: flex; height: 27px; background: linear-gradient(#3c4448, #0a0d10 3px, #000); color: #e2e2e2; }

.start { width: 48px; margin-top: -5px; display: grid; place-items: center; }
.pinned { display: grid; place-items: center; width: 47px; }

.task {
  display: flex;
  align-items: center;
  gap: 4px;
  width: 141px;
  margin-right: 3px;
  padding: 0 8px;
  border: 1px solid #70767a;
  border-radius: 2px;
  background: linear-gradient(175deg, #868a8c, #3a4044 45%, #14191d 55%, #20262a);
  white-space: nowrap;
}

.task.current { background: linear-gradient(175deg, #b4b6b8, #8c8f92 45%, #6c7074 55%, #868a8e); border-color: #b8bcc0; }
.task-group { display: flex; margin-right: 3px; }
.task-group .task { width: 142px; margin: 0; }
.task-group .task:first-child { border-right: 0; }
.task-group .task:last-child { border-left: 0; }

.tray { display: flex; align-items: center; gap: 9px; margin-left: auto; }
.lang { font: 9px "DejaVu Sans Mono", monospace; align-self: flex-start; padding: 7px 3px; }
.tray-icon { display: grid; place-items: center; }
.ime { width: 15px; height: 15px; background: #ee7a1c; color: #fff; font: 700 13px/14px "Noto Sans CJK SC", sans-serif; }
time { margin: 0 2px 0 8px; }
.show-desktop { width: 11px; height: 27px; border: 1px solid #666; background: linear-gradient(#777, #111 60%); }

.watermark {
  position: absolute;
  right: 37px;
  bottom: 32px;
  display: flex;
  gap: 9px;
  align-items: center;
  color: #6c6c6c;
  fill: currentColor;
  opacity: .7;
  font: 33px/38px "Noto Sans CJK SC", sans-serif;
  white-space: nowrap;
  pointer-events: none;
}
```
